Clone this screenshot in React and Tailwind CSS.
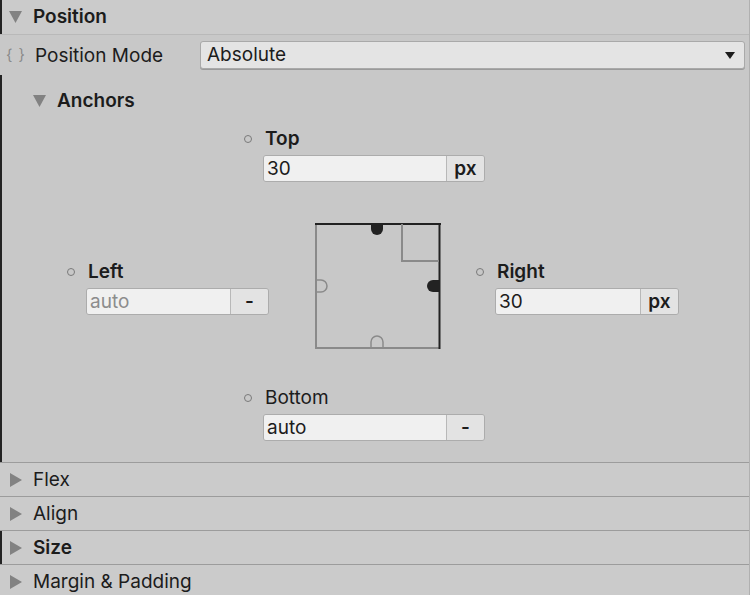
import React from 'react';

// Small gray disclosure arrows
function ArrowDown({ className = '' }) {
  return (
    <svg width="13" height="12" viewBox="0 0 13 12" className={className}>
      <polygon points="0,0 13,0 6.5,12" fill="#828282" />
    </svg>
  );
}

function ArrowRight({ className = '' }) {
  return (
    <svg width="12" height="14" viewBox="0 0 12 14" className={className}>
      <polygon points="0,0 12,7 0,14" fill="#828282" />
    </svg>
  );
}

function Dot() {
  return <span className="w-[8px] h-[8px] rounded-full border border-[#7a7a7a] shrink-0" />;
}

// Value field with a unit button on the right
function UnitField({ value, unit, widthClass, muted }) {
  return (
    <div className={`flex h-[27px] rounded-[3px] border border-[#acacac] overflow-hidden ${widthClass}`}>
      <div className={`flex-1 flex items-center pl-[3px] bg-[#f0f0f0] ${muted ? 'text-[#8c8c8c]' : 'text-[#1c1c1c]'}`}>
        {value}
      </div>
      <div className="w-[38px] flex items-center justify-center bg-[#e3e3e3] border-l border-[#b8b8b8] font-semibold">
        {unit}
      </div>
    </div>
  );
}

function AnchorField({ label, bold, value, unit, widthClass, muted }) {
  return (
    <div className="flex flex-col">
      <div className="flex items-center h-[20px]">
        <Dot />
        <span className={`ml-[13px] ${bold ? 'font-semibold' : ''}`}>{label}</span>
      </div>
      <div className="mt-[6px] ml-[19px]">
        <UnitField value={value} unit={unit} widthClass={widthClass} muted={muted} />
      </div>
    </div>
  );
}

function AnchorBox() {
  return (
    <svg width="126" height="127" viewBox="0 0 126 127" className="shrink-0">
      <line x1="1" y1="0" x2="1" y2="126" stroke="#8a8a8a" strokeWidth="2" />
      <line x1="0" y1="125" x2="125" y2="125" stroke="#8a8a8a" strokeWidth="2" />
      <line x1="0" y1="1" x2="126" y2="1" stroke="#222" strokeWidth="2" />
      <line x1="124.5" y1="0" x2="124.5" y2="126" stroke="#222" strokeWidth="2" />
      <polyline points="87,1 87,38 124,38" fill="none" stroke="#8a8a8a" strokeWidth="2" />
      <path d="M56,1 L56,6 A6,6 0 0 0 68,6 L68,1 Z" fill="#222" />
      <path d="M124,57 L118,57 A6,6 0 0 0 118,69 L124,69 Z" fill="#222" />
      <path d="M2,57 L6,57 A6,6 0 0 1 6,69 L2,69" fill="none" stroke="#8a8a8a" strokeWidth="1.5" />
      <path d="M56,124 L56,119 A6,6 0 0 1 68,119 L68,124" fill="none" stroke="#8a8a8a" strokeWidth="1.5" />
    </svg>
  );
}

function CollapsedRow({ label, bold, marked }) {
  return (
    <div
      className={`h-[34px] flex items-center border-t border-[#9c9c9c] bg-[#cbcbcb] ${marked ? 'shadow-[inset_2px_0_0_#232323]' : ''}`}
    >
      <ArrowRight className="ml-[10px] mt-[1px]" />
      <span className={`ml-[11px] ${bold ? 'font-semibold' : ''}`}>{label}</span>
    </div>
  );
}

export default function App() {
  return (
    <div className="w-[750px] h-[595px] overflow-hidden bg-[#c8c8c8] text-[19px] leading-[24px] text-[#1c1c1c] font-['Inter',sans-serif] border-r border-[#b0b0b0]">
      {/* Position header */}
      <div className="h-[35px] flex items-center bg-[#cbcbcb] border-b border-[#b9b9b9] shadow-[inset_2px_0_0_#232323]">
        <ArrowDown className="ml-[9px]" />
        <span className="ml-[11px] font-semibold">Position</span>
      </div>

      {/* Position Mode */}
      <div className="flex items-center pt-[6px]">
        <span className="w-[35px] pl-[6px] text-[15px] text-[#8a8a8a] tracking-[1px]">{'{ }'}</span>
        <span className="w-[165px] mt-[2px]">Position Mode</span>
        <div className="flex-1 mr-[4px] h-[28px] flex items-center justify-between rounded-[3px] bg-[#e4e4e4] border border-[#a9a9a9] shadow-[0_1px_0_#9a9a9a] px-[6px]">
          <span>Absolute</span>
          <svg width="10" height="7" viewBox="0 0 10 7" className="mr-[3px]">
            <polygon points="0,0 10,0 5,7" fill="#1c1c1c" />
          </svg>
        </div>
      </div>

      {/* Anchors */}
      <div className="shadow-[inset_2px_0_0_#232323] pb-[21px] mt-[6px] pt-[14px]">
        <div className="flex items-center h-[24px]">
          <ArrowDown className="ml-[33px]" />
          <span className="ml-[11px] font-semibold">Anchors</span>
        </div>

        <div className="ml-[244px] mt-[16px]">
          <AnchorField label="Top" bold value="30" unit="px" widthClass="w-[222px]" />
        </div>

        <div className="flex items-start mt-[41px]">
          <div className="ml-[67px] mt-[39px]">
            <AnchorField label="Left" bold value="auto" unit="-" widthClass="w-[183px]" muted />
          </div>
          <div className="ml-[46px]">
            <AnchorBox />
          </div>
          <div className="ml-[35px] mt-[39px]">
            <AnchorField label="Right" bold value="30" unit="px" widthClass="w-[184px]" />
          </div>
        </div>

        <div className="ml-[244px] mt-[38px]">
          <AnchorField label="Bottom" value="auto" unit="-" widthClass="w-[222px]" />
        </div>
      </div>

      <CollapsedRow label="Flex" />
      <CollapsedRow label="Align" />
      <CollapsedRow label="Size" bold marked />
      <CollapsedRow label="Margin & Padding" />
    </div>
  );
}
